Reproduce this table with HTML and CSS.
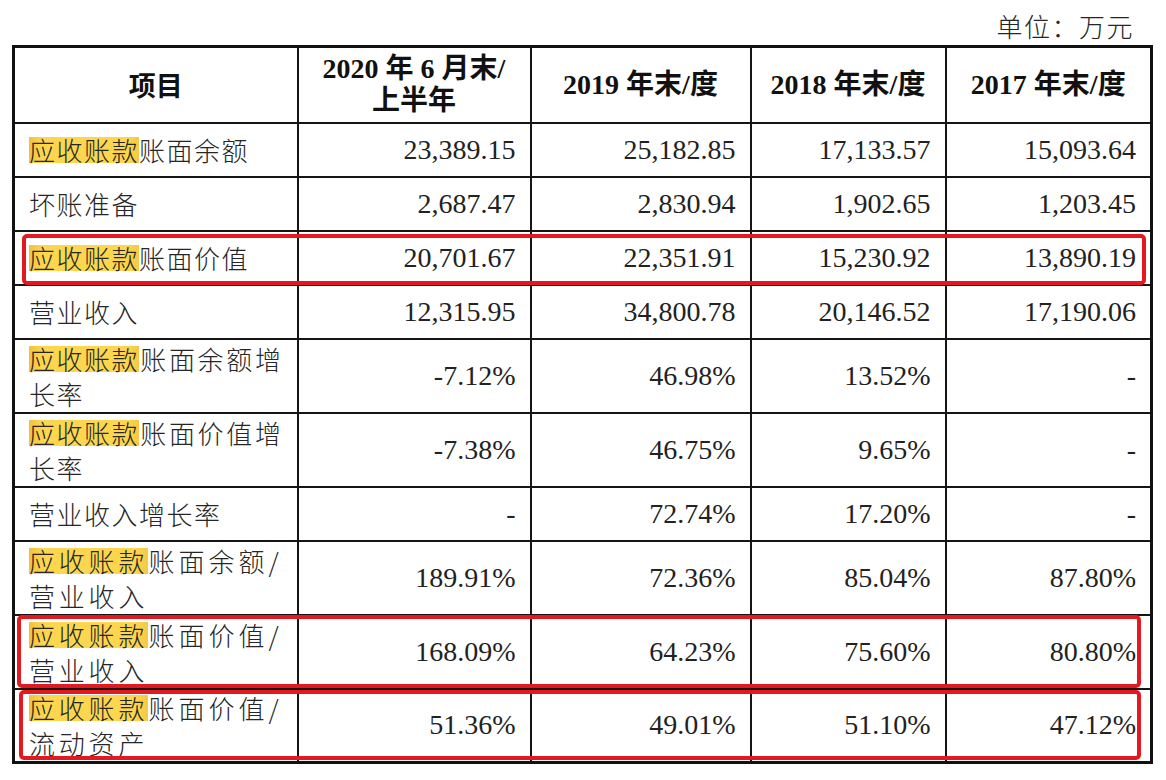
FILE: index.html
```html
<!DOCTYPE html>
<html lang="zh-CN">
<head>
<meta charset="utf-8">
<title>应收账款</title>
<link rel="stylesheet" href="styles.css">
</head>
<body>
<div class="page">
  <div class="unit">单位：万元</div>
  <div class="table-wrap">
    <table class="fin">
      <colgroup>
        <col class="c1"><col class="c2"><col class="c3"><col class="c4"><col class="c5">
      </colgroup>
      <thead>
        <tr class="head">
          <th class="item">项目</th>
          <th>2020 年 6 月末/<br>上半年</th>
          <th>2019 年末/度</th>
          <th>2018 年末/度</th>
          <th>2017 年末/度</th>
        </tr>
      </thead>
      <tbody>
        <tr class="single">
          <td class="label"><span class="hl">应收账款</span>账面余额</td>
          <td class="num">23,389.15</td><td class="num">25,182.85</td><td class="num">17,133.57</td><td class="num">15,093.64</td>
        </tr>
        <tr class="single">
          <td class="label">坏账准备</td>
          <td class="num">2,687.47</td><td class="num">2,830.94</td><td class="num">1,902.65</td><td class="num">1,203.45</td>
        </tr>
        <tr class="single">
          <td class="label"><span class="hl">应收账款</span>账面价值</td>
          <td class="num">20,701.67</td><td class="num">22,351.91</td><td class="num">15,230.92</td><td class="num">13,890.19</td>
        </tr>
        <tr class="single">
          <td class="label">营业收入</td>
          <td class="num">12,315.95</td><td class="num">34,800.78</td><td class="num">20,146.52</td><td class="num">17,190.06</td>
        </tr>
        <tr class="double">
          <td class="label"><span class="hl">应收账款</span>账面余额增长率</td>
          <td class="num">-7.12%</td><td class="num">46.98%</td><td class="num">13.52%</td><td class="num">-</td>
        </tr>
        <tr class="double">
          <td class="label"><span class="hl">应收账款</span>账面价值增长率</td>
          <td class="num">-7.38%</td><td class="num">46.75%</td><td class="num">9.65%</td><td class="num">-</td>
        </tr>
        <tr class="single">
          <td class="label">营业收入增长率</td>
          <td class="num">-</td><td class="num">72.74%</td><td class="num">17.20%</td><td class="num">-</td>
        </tr>
        <tr class="double">
          <td class="label spread"><span class="hl">应收账款</span>账面余额/营业收入</td>
          <td class="num">189.91%</td><td class="num">72.36%</td><td class="num">85.04%</td><td class="num">87.80%</td>
        </tr>
        <tr class="double">
          <td class="label spread"><span class="hl">应收账款</span>账面价值/营业收入</td>
          <td class="num">168.09%</td><td class="num">64.23%</td><td class="num">75.60%</td><td class="num">80.80%</td>
        </tr>
        <tr class="double">
          <td class="label spread"><span class="hl">应收账款</span>账面价值/流动资产</td>
          <td class="num">51.36%</td><td class="num">49.01%</td><td class="num">51.10%</td><td class="num">47.12%</td>
        </tr>
      </tbody>
    </table>
    <div class="mark mark-1"></div>
    <div class="mark mark-2"></div>
    <div class="mark mark-3"></div>
  </div>
</div>
</body>
</html>
```

FILE: styles.css
```css
html, body {
  margin: 0;
  padding: 0;
  background: #ffffff;
}

.page {
  width: 1166px;
  height: 780px;
  padding-left: 12px;
  box-sizing: border-box;
  color: #222;
  font-family: "Noto Sans CJK SC", "Liberation Sans", sans-serif;
}

.unit {
  width: 1138px;
  height: 45px;
  box-sizing: border-box;
  padding-top: 10px;
  padding-right: 16px;
  line-height: 32px;
  text-align: right;
  font-family: "Noto Sans CJK SC Light", "Noto Sans CJK SC DemiLight", "Noto Sans CJK SC", sans-serif;
  font-size: 26px;
  letter-spacing: 1.5px;
  color: #262626;
}

.table-wrap {
  position: relative;
  width: 1138px;
}

.fin {
  width: 1138px;
  table-layout: fixed;
  border-collapse: collapse;
  border: 3px solid #111;
}

.c1 { width: 284px; }
.c2 { width: 233px; }
.c3 { width: 220px; }
.c4 { width: 195px; }
.c5 { width: 206px; }

.fin th,
.fin td {
  border: 2px solid #151515;
  vertical-align: middle;
  padding: 0 14px;
}

.head {
  height: 76px;
}

.fin th {
  font-family: "Liberation Serif", "Noto Sans CJK SC", serif;
  font-weight: bold;
  font-size: 28px;
  line-height: 32px;
  text-align: center;
  color: #111;
}

.fin th.item {
  font-family: "Noto Sans CJK SC", sans-serif;
  font-size: 27px;
}

.single {
  height: 54px;
}

.double {
  height: 74px;
}

.label {
  font-family: "Noto Sans CJK SC Light", "Noto Sans CJK SC DemiLight", "Noto Sans CJK SC", sans-serif;
  font-size: 26px;
  letter-spacing: 1.5px;
  line-height: 35px;
  text-align: justify;
  color: #262626;
}

.label.spread {
  letter-spacing: 3.8px;
}

.hl {
  display: inline-block;
  line-height: 26px;
  background-image: linear-gradient(90deg, #f2c13c, #fcd64e 12%, #fcd64e 88%, #f6c943);
}

.num {
  font-family: "Liberation Serif", serif;
  font-size: 28px;
  line-height: 34px;
  text-align: right;
  color: #222;
}

.mark {
  position: absolute;
  border: 4.5px solid #e4191f;
  border-radius: 5px;
  box-sizing: border-box;
  pointer-events: none;
}

.mark-1 {
  left: 10px;
  top: 189px;
  width: 1124px;
  height: 51px;
}

.mark-2 {
  left: 5px;
  top: 570px;
  width: 1124px;
  height: 73px;
}

.mark-3 {
  left: 7px;
  top: 645px;
  width: 1122px;
  height: 70px;
}
```
